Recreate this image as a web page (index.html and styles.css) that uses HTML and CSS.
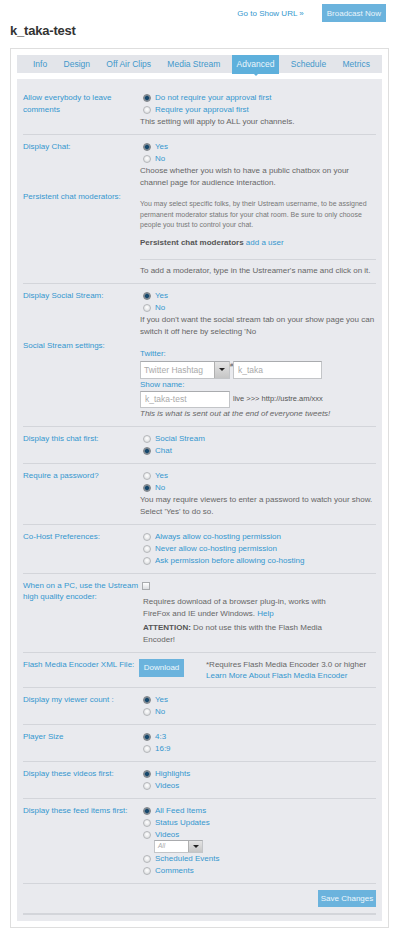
FILE: index.html
```html
<!DOCTYPE html>
<html lang="en">
  <head>
    <meta charset="UTF-8" />
    <meta name="viewport" content="width=device-width, initial-scale=1.0" />
    <title>k_taka-test - Advanced</title>
    <link rel="stylesheet" href="styles.css">
  </head>
  <body>
    <div class="top-bar">
      <a class="show-url" href="#">Go to Show URL &raquo;</a>
      <a class="btn btn-broadcast" href="#">Broadcast Now</a>
    </div>
    <h1 class="channel-title">k_taka-test</h1>

    <div class="channel-box">
      <ul class="tabs">
        <li><a href="#">Info</a></li>
        <li><a href="#">Design</a></li>
        <li><a href="#">Off Air Clips</a></li>
        <li><a href="#">Media Stream</a></li>
        <li class="active"><a href="#">Advanced</a></li>
        <li><a href="#">Schedule</a></li>
        <li><a href="#">Metrics</a></li>
      </ul>

      <form class="settings">
        <!-- comments -->
        <div class="section">
          <div class="row">
            <div class="label">Allow everybody to leave<br>comments</div>
            <div class="field">
              <label class="opt"><input type="radio" name="comments" checked> Do not require your approval first</label>
              <label class="opt"><input type="radio" name="comments"> Require your approval first</label>
              <p class="hint">This setting will apply to ALL your channels.</p>
            </div>
          </div>
        </div>

        <!-- chat -->
        <div class="section">
          <div class="row">
            <div class="label">Display Chat:</div>
            <div class="field">
              <label class="opt"><input type="radio" name="chat" checked> Yes</label>
              <label class="opt"><input type="radio" name="chat"> No</label>
              <p class="hint">Choose whether you wish to have a public chatbox on your<br>channel page for audience interaction.</p>
            </div>
          </div>
          <div class="row row-sub">
            <div class="label">Persistent chat moderators:</div>
            <div class="field field-mods">
              <p class="small">You may select specific folks, by their Ustream username, to be assigned<br>permanent moderator status for your chat room. Be sure to only choose<br>people you trust to control your chat.</p>
              <p class="mods"><b>Persistent chat moderators</b> <a href="#">add a user</a></p>
              <div class="divider"></div>
              <p class="hint">To add a moderator, type in the Ustreamer's name and click on it.</p>
            </div>
          </div>
        </div>

        <!-- social stream -->
        <div class="section">
          <div class="row">
            <div class="label">Display Social Stream:</div>
            <div class="field">
              <label class="opt"><input type="radio" name="social" checked> Yes</label>
              <label class="opt"><input type="radio" name="social"> No</label>
              <p class="hint">If you don't want the social stream tab on your show page you can<br>switch it off here by selecting 'No</p>
            </div>
          </div>
          <div class="row row-sub">
            <div class="label">Social Stream settings:</div>
            <div class="field field-social">
              <div class="caption">Twitter:</div>
              <div class="input-line">
                <div class="select select-hashtag">
                  <span>Twitter Hashtag</span>
                  <i class="select-arrow"></i>
                </div>
                <span class="hash">#</span>
                <input class="text-input input-user" type="text" placeholder="k_taka">
              </div>
              <div class="caption">Show name:</div>
              <div class="input-line">
                <input class="text-input input-show" type="text" placeholder="k_taka-test">
                <span class="tweet-tail">live &gt;&gt;&gt; http://ustre.am/xxx</span>
              </div>
              <p class="hint hint-italic">This is what is sent out at the end of everyone tweets!</p>
            </div>
          </div>
        </div>

        <div class="section">
          <div class="row">
            <div class="label">Display this chat first:</div>
            <div class="field">
              <label class="opt"><input type="radio" name="chatfirst"> Social Stream</label>
              <label class="opt"><input type="radio" name="chatfirst" checked> Chat</label>
            </div>
          </div>
        </div>

        <div class="section">
          <div class="row">
            <div class="label">Require a password?</div>
            <div class="field">
              <label class="opt"><input type="radio" name="password"> Yes</label>
              <label class="opt"><input type="radio" name="password" checked> No</label>
              <p class="hint">You may require viewers to enter a password to watch your show.<br>Select 'Yes' to do so.</p>
            </div>
          </div>
        </div>

        <div class="section">
          <div class="row">
            <div class="label">Co-Host Preferences:</div>
            <div class="field">
              <label class="opt"><input type="radio" name="cohost"> Always allow co-hosting permission</label>
              <label class="opt"><input type="radio" name="cohost"> Never allow co-hosting permission</label>
              <label class="opt"><input type="radio" name="cohost"> Ask permission before allowing co-hosting</label>
            </div>
          </div>
        </div>

        <div class="section">
          <div class="row">
            <div class="label label-wide">When on a PC, use the Ustream<br>high quality encoder:</div>
            <div class="field">
              <label class="opt"><input type="checkbox" name="hq"></label>
              <div class="encoder-notes">
                <p class="hint">Requires download of a browser plug-in, works with<br>FireFox and IE under Windows. <a href="#">Help</a></p>
                <p class="hint attention"><b>ATTENTION:</b> Do not use this with the Flash Media<br>Encoder!</p>
              </div>
            </div>
          </div>
        </div>

        <div class="section">
          <div class="row">
            <div class="label">Flash Media Encoder XML File:</div>
            <div class="field field-fme">
              <a class="btn btn-download" href="#">Download</a>
              <div class="fme-notes">
                <p class="hint">*Requires Flash Media Encoder 3.0 or higher</p>
                <a href="#">Learn More About Flash Media Encoder</a>
              </div>
            </div>
          </div>
        </div>

        <div class="section">
          <div class="row">
            <div class="label">Display my viewer count :</div>
            <div class="field">
              <label class="opt"><input type="radio" name="viewers" checked> Yes</label>
              <label class="opt"><input type="radio" name="viewers"> No</label>
            </div>
          </div>
        </div>

        <div class="section">
          <div class="row">
            <div class="label">Player Size</div>
            <div class="field">
              <label class="opt"><input type="radio" name="player" checked> 4:3</label>
              <label class="opt"><input type="radio" name="player"> 16:9</label>
            </div>
          </div>
        </div>

        <div class="section">
          <div class="row">
            <div class="label">Display these videos first:</div>
            <div class="field">
              <label class="opt"><input type="radio" name="videos" checked> Highlights</label>
              <label class="opt"><input type="radio" name="videos"> Videos</label>
            </div>
          </div>
        </div>

        <div class="section">
          <div class="row">
            <div class="label">Display these feed items first:</div>
            <div class="field">
              <label class="opt"><input type="radio" name="feed" checked> All Feed Items</label>
              <label class="opt"><input type="radio" name="feed"> Status Updates</label>
              <label class="opt"><input type="radio" name="feed"> Videos</label>
              <div class="select select-videos">
                <span>All</span>
                <i class="select-arrow"></i>
              </div>
              <label class="opt"><input type="radio" name="feed"> Scheduled Events</label>
              <label class="opt"><input type="radio" name="feed"> Comments</label>
            </div>
          </div>
        </div>

        <div class="section section-save">
          <button class="btn btn-save" type="button">Save Changes</button>
        </div>
      </form>
    </div>
  </body>
</html>
```

FILE: styles.css
```css
body {
  margin: 0;
  background: #fff;
  font-family: "Liberation Sans", Tahoma, sans-serif;
  font-size: 8px;
  color: #666;
}

a {
  color: #3597ce;
  text-decoration: none;
}

p {
  margin: 0;
}

.btn {
  display: inline-flex;
  align-items: center;
  justify-content: center;
  background: #6bb3dd;
  color: #eef7fc;
  border: none;
  font-family: inherit;
  font-size: 8px;
  cursor: pointer;
}

/* Header */
.top-bar {
  display: flex;
  justify-content: flex-end;
  align-items: center;
  gap: 18px;
  padding: 4px 14px 0 0;
}

.btn-broadcast {
  height: 18px;
  padding: 0 5px;
  color: #e9f4fb;
}

.channel-title {
  margin: 0 0 8px 10px;
  font-size: 13px;
  line-height: 18px;
  letter-spacing: -0.2px;
  color: #333;
}

/* Channel box */
.channel-box {
  margin: 0 11px 0 10px;
  border: 1px solid #dedede;
  padding: 6px;
}

.tabs {
  display: flex;
  justify-content: space-between;
  height: 18px;
  margin: 0 0 6px;
  padding: 0 7px 0 11px;
  list-style: none;
  background: #e3e5ea;
}

.tabs li {
  position: relative;
}

.tabs a {
  display: block;
  padding: 0 5px;
  line-height: 18px;
  font-size: 8.5px;
  color: #4298cb;
}

.tabs .active a {
  height: 19px;
  background: #5eb0dc;
  color: #eaf5fb;
}

.tabs .active::after {
  content: "";
  position: absolute;
  left: 50%;
  bottom: -3px;
  margin-left: -3px;
  border: 3px solid transparent;
  border-top-color: #5eb0dc;
  border-bottom: 0;
}

/* Settings panel */
.settings {
  background: #e9eaee;
  padding: 7px 6px 6px;
}

.section {
  border-bottom: 1px solid #d3d5da;
  padding: 6px 0;
}

.row {
  display: grid;
  grid-template-columns: 117px 1fr;
  line-height: 12px;
}

.row-sub {
  margin-top: 2px;
}

.label {
  color: #3597ce;
  line-height: 11.5px;
}

.label-wide {
  margin-right: -5px;
}

.opt {
  display: flex;
  align-items: center;
  height: 12px;
  color: #3597ce;
}

.opt input {
  appearance: none;
  width: 8px;
  height: 8px;
  margin: 0 4px 0 3px;
  border: 1px solid #b5b7ba;
  border-radius: 50%;
  background: radial-gradient(circle at 50% 40%, #fff, #d4d6d9);
}

.opt input:checked {
  border-color: #7e8286;
  background: radial-gradient(circle, #17486c 0 1.6px, #5e7385 2.2px, #c5c9cd 4px);
}

.opt input[type="checkbox"] {
  width: 8px;
  height: 8px;
  margin: 0 0 0 2px;
  border-radius: 0;
  border-color: #a9abae;
  background: linear-gradient(#fff, #dcdee1);
}

.hint {
  color: #666;
}

.hint-italic {
  font-style: italic;
}

/* Moderators */
.field-mods {
  padding-top: 8px;
}

.small {
  font-size: 7px;
  line-height: 10.5px;
  color: #777;
}

.mods {
  margin-top: 6px;
  color: #555;
}

.divider {
  border-top: 1px solid #d3d5da;
  margin: 10px 0 5px;
}

/* Social stream inputs */
.field-social {
  padding-top: 8px;
}

.caption {
  color: #3597ce;
  line-height: 12px;
}

.field-social .caption + .input-line {
  margin-top: 1px;
}

.field-social .input-line + .caption {
  line-height: 11px;
}

.input-line {
  display: flex;
  align-items: center;
}

.select {
  display: flex;
  align-items: center;
  justify-content: space-between;
  box-sizing: border-box;
  background: #fff;
  border: 1px solid #c3c5c8;
  border-top-color: #a9abae;
  color: #aaa;
}

.select span {
  padding-left: 3px;
}

.select-arrow {
  display: flex;
  align-items: center;
  justify-content: center;
  width: 14px;
  height: 100%;
  background: linear-gradient(#e4e4e4, #c6c6c6);
  border-left: 1px solid #b0b0b0;
}

.select-arrow::before {
  content: "";
  border: 3px solid transparent;
  border-top: 3px solid #222;
  border-bottom: 0;
}

.select-hashtag {
  width: 90px;
  height: 18px;
  font-size: 8.5px;
}

.hash {
  width: 3px;
  font-size: 6px;
  color: #555;
  align-self: flex-start;
  line-height: 8px;
}

.text-input {
  box-sizing: border-box;
  height: 18px;
  margin: 0;
  padding: 0 4px;
  border: 1px solid #c3c5c8;
  border-top-color: #a9abae;
  background: #fff;
  font-family: inherit;
  font-size: 8.5px;
}

.text-input::placeholder {
  color: #aaa;
}

.input-user {
  width: 89px;
}

.input-show {
  width: 90px;
  height: 17px;
}

.tweet-tail {
  margin-left: 3px;
  color: #555;
  font-size: 7.5px;
}

/* Encoder */
.encoder-notes {
  margin-top: 4px;
  padding-left: 3px;
}

.attention {
  margin-top: 2px;
}

.attention b {
  color: #555;
}

.field-fme {
  display: flex;
  align-items: flex-start;
  line-height: 11px;
}

.btn-download {
  width: 45px;
  height: 18px;
  margin-left: -1px;
}

.fme-notes {
  margin-left: 22px;
}

/* Feed */
.select-videos {
  width: 49px;
  height: 13px;
  margin: -1px 0 0 14px;
  font-size: 6.5px;
  font-style: italic;
}

.select-videos .select-arrow {
  width: 13px;
}

/* Save */
.section-save {
  display: flex;
  justify-content: flex-end;
  border-bottom-width: 2px;
  padding: 6px 0;
}

.btn-save {
  width: 58px;
  height: 17px;
  padding: 0;
}
```
